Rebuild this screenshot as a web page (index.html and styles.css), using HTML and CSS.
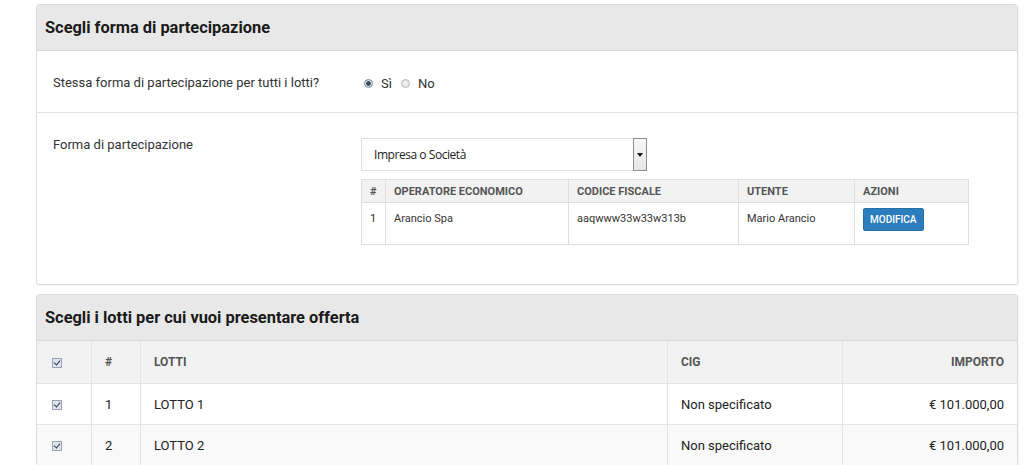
FILE: index.html
```html
<!DOCTYPE html>
<html lang="it">
<head>
<meta charset="utf-8">
<title>Partecipazione</title>
<link rel="stylesheet" href="styles.css">
</head>
<body>
<div class="page">
  <section class="panel">
    <header class="panel-head"><h2>Scegli forma di partecipazione</h2></header>
    <div class="form-row row-first">
      <div class="label">Stessa forma di partecipazione per tutti i lotti?</div>
      <div class="control radios">
        <span class="radio checked"></span><span class="rlabel">Sì</span>
        <span class="radio"></span><span class="rlabel">No</span>
      </div>
    </div>
    <div class="form-row row-second">
      <div class="label">Forma di partecipazione</div>
      <div class="control">
        <div class="select">
          <span class="select-text">Impresa o Società</span>
          <span class="select-btn"><span class="caret"></span></span>
        </div>
        <table class="inner">
          <thead>
            <tr><th class="c-n">#</th><th class="c-op">OPERATORE ECONOMICO</th><th class="c-cf">CODICE FISCALE</th><th class="c-ut">UTENTE</th><th>AZIONI</th></tr>
          </thead>
          <tbody>
            <tr><td>1</td><td>Arancio Spa</td><td>aaqwww33w33w313b</td><td>Mario Arancio</td><td><span class="btn">MODIFICA</span></td></tr>
          </tbody>
        </table>
      </div>
    </div>
  </section>

  <section class="panel panel-lots">
    <header class="panel-head"><h2>Scegli i lotti per cui vuoi presentare offerta</h2></header>
    <table class="lots">
      <thead>
        <tr><th class="l-chk"><span class="chk"></span></th><th class="l-n">#</th><th class="l-name">LOTTI</th><th class="l-cig">CIG</th><th class="l-amt">IMPORTO</th></tr>
      </thead>
      <tbody>
        <tr><td class="l-chk"><span class="chk"></span></td><td>1</td><td>LOTTO 1</td><td>Non specificato</td><td class="l-amt">€ 101.000,00</td></tr>
        <tr class="alt"><td class="l-chk"><span class="chk"></span></td><td>2</td><td>LOTTO 2</td><td>Non specificato</td><td class="l-amt">€ 101.000,00</td></tr>
      </tbody>
    </table>
  </section>
</div>
</body>
</html>
```

FILE: styles.css
```css
html, body {
  margin: 0;
  padding: 0;
  background: #ffffff;
}
body {
  font-family: Roboto, "Liberation Sans", Arial, sans-serif;
  color: #333;
  font-size: 13px;
}
.page {
  padding: 4px 6px 0 36px;
}
.panel {
  border: 1px solid #dcdcdc;
  border-radius: 3px;
  background: #fff;
  box-shadow: 1px 1px 2px rgba(0,0,0,0.06);
  overflow: hidden;
}
.panel-lots {
  margin-top: 9px;
}
.panel-head {
  background: #e8e8e8;
  height: 45px;
  border-bottom: 1px solid #d9d9d9;
  display: flex;
  align-items: center;
  padding-left: 8px;
}
.panel-head h2 {
  margin: 0;
  font-size: 16.4px;
  font-weight: 700;
  color: #1a1a1a;
}
.form-row {
  display: flex;
}
.label {
  width: 307px;
  padding-left: 16px;
  flex: none;
  line-height: 16px;
}
.row-first {
  height: 62px;
  align-items: center;
  border-bottom: 1px solid #e3e3e3;
  padding-top: 3px;
  box-sizing: border-box;
}
.row-second {
  padding: 24px 0 39px;
}
.control {
  margin-left: 1px;
}
.radios {
  display: flex;
  align-items: center;
  padding-left: 3px;
}
.radio {
  width: 9px;
  height: 9px;
  border-radius: 50%;
  border: 1px solid #b8b8b8;
  background: radial-gradient(circle, #f4f4f4 0, #dedede 100%);
  box-sizing: border-box;
}
.radio.checked {
  border-color: #7a8a99;
  background: radial-gradient(circle, #3c4f63 0, #3c4f63 40%, #dfe6ec 55%, #c7d0d8 100%);
}
.rlabel {
  margin: 0 9px 0 8px;
  color: #333;
}
.select {
  width: 286px;
  height: 33px;
  box-sizing: border-box;
  border: 1px solid #dedede;
  display: flex;
  align-items: center;
  background: #fff;
  margin-top: 1px;
}
.select-text {
  flex: 1;
  padding-left: 12px;
  font-family: "Open Sans", "Noto Sans", sans-serif;
  font-size: 12px;
  letter-spacing: -0.45px;
  color: #222;
}
.select-btn {
  width: 14px;
  height: 33px;
  box-sizing: border-box;
  border: 1px solid #8e8e8e;
  background: linear-gradient(#f7f7f7, #e6e6e6);
  display: flex;
  align-items: center;
  justify-content: center;
  margin-right: -1px;
  margin-top: -1px;
  margin-bottom: -1px;
}
.caret {
  width: 0;
  height: 0;
  border-left: 3px solid transparent;
  border-right: 3px solid transparent;
  border-top: 4px solid #111;
}
.inner {
  margin-top: 8px;
  width: 608px;
  border-collapse: collapse;
  font-size: 11px;
  border: 1px solid #dedede;
}
.inner th, .inner td {
  border: 1px solid #dedede;
  text-align: left;
  padding: 0 8px;
}
.inner th {
  background: #f2f2f2;
  color: #555;
  font-weight: 700;
  height: 22px;
}
.inner td {
  height: 42px;
  vertical-align: top;
  padding-top: 5px;
  line-height: 22px;
  color: #333;
  box-sizing: border-box;
}
.c-n { width: 7px; }
.c-op { width: 166px; }
.c-cf { width: 153px; }
.c-ut { width: 99px; }
.btn {
  display: inline-block;
  background: #2b7dbd;
  color: #fff;
  font-size: 10px;
  font-weight: 500;
  line-height: 21px;
  padding: 0 6px;
  border-radius: 2px;
  border: 1px solid #2670aa;
}
.lots {
  width: 100%;
  border-collapse: collapse;
  font-size: 13px;
}
.lots th, .lots td {
  border-right: 1px solid #e3e3e3;
  border-top: 1px solid #e3e3e3;
  text-align: left;
  padding: 0 13px;
}
.lots th:last-child, .lots td:last-child { border-right: none; }
.lots thead tr th { border-top: none; }
.lots th {
  background: #f2f2f2;
  height: 42px;
  font-size: 12px;
  font-weight: 700;
  color: #555;
}
.lots td {
  height: 40px;
  color: #222;
}
.lots tr.alt td { background: #f9f9f9; }
.lots .l-chk { width: 26px; padding-left: 15px; }
.lots .l-n { width: 22px; }
.lots .l-cig { width: 148px; }
.lots .l-amt { text-align: right; width: 148px; }
.chk {
  display: inline-block;
  width: 10px;
  height: 10px;
  box-sizing: border-box;
  border: 1px solid #9aa3b5;
  background: #dfe3ec;
  position: relative;
  vertical-align: middle;
}
.chk::after {
  content: "";
  position: absolute;
  left: 2px;
  top: 0px;
  width: 3px;
  height: 5px;
  border-right: 1.5px solid #2e3c5a;
  border-bottom: 1.5px solid #2e3c5a;
  transform: rotate(40deg);
}
```
